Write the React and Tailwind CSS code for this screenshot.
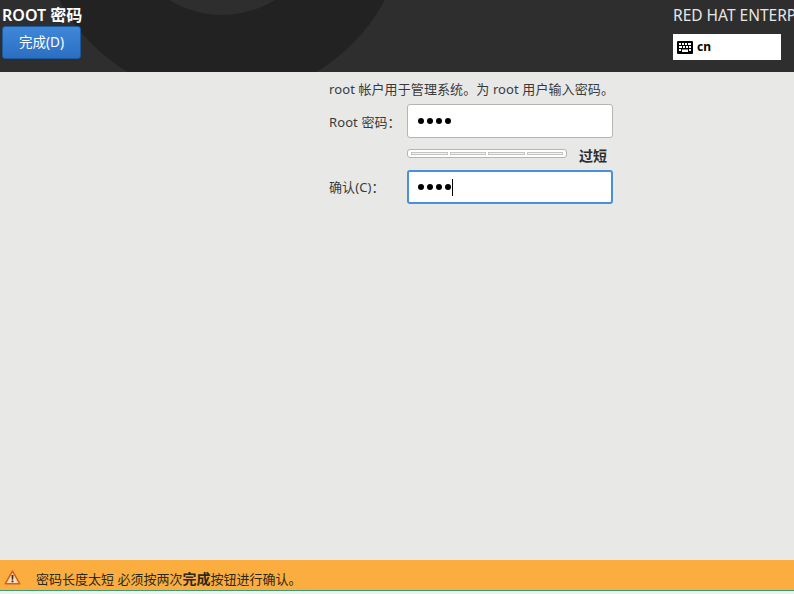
const cjk = "font-['Noto_Sans','Noto_Sans_CJK_SC',sans-serif]";

function KeyboardIcon() {
  return (
    <svg width="16" height="13" viewBox="0 0 16 13" className="shrink-0">
      <rect x="0" y="0" width="16" height="13" rx="1" fill="#000" />
      <path d="M2 2h2v2H2zM5 2h2v2H5zM8 2h2v2H8zM11 2h3v2h-3zM2 5h3v2H2zM6 5h2v2H6zM9 5h2v2H9zM12 5h2v2h-2zM2 8h2v2H2zM12 8h2v2h-2zM5 8.5h6V11H5z" fill="#fff" />
    </svg>
  );
}

function WarningIcon() {
  return (
    <svg width="17" height="15" viewBox="0 0 17 15" className="shrink-0 -mt-[4px]">
      <path d="M8.5 1.2 L15.8 13.8 H1.2 Z" fill="#f6dfb8" stroke="#d9601a" strokeWidth="1.6" strokeLinejoin="round" />
      <path d="M7.5 5h2l-.3 4.8H7.8z" fill="#3a2a1a" />
      <rect x="7.6" y="10.5" width="1.8" height="1.8" fill="#3a2a1a" />
    </svg>
  );
}

function Dots() {
  return (
    <span className="flex gap-[3px]">
      {[0, 1, 2, 3].map((i) => (
        <span key={i} className="w-[6px] h-[6px] rounded-full bg-black" />
      ))}
    </span>
  );
}

export default function App() {
  return (
    <div className={`w-[794px] h-[594px] flex flex-col overflow-hidden bg-[#e8e8e7] ${cjk}`}>
      <header className="relative h-[72px] shrink-0 bg-[#2e2e2e] overflow-hidden flex justify-between">
        <svg className="absolute left-0 top-0" width="794" height="72" viewBox="0 0 794 72">
          <circle cx="222" cy="-86" r="184" fill="#222222" />
          <circle cx="222" cy="-86" r="101" fill="#2e2e2e" />
        </svg>
        <div className="relative pl-[2px] pt-[5px]">
          <h1 className="text-[16px] leading-[21px] font-semibold text-white">ROOT 密码</h1>
          <button className="w-[79px] h-[33px] rounded-[3px] border border-[#1c5a9e] bg-gradient-to-b from-[#3f87d9] to-[#2b6fc2] text-[13.5px] text-white">
            完成(D)
          </button>
        </div>
        <div className="relative w-[121px] pt-[5px]">
          <div className="text-[15.5px] leading-[20px] text-[#e6e6e6] whitespace-nowrap">RED HAT ENTERPRISE LINUX</div>
          <div className="mt-[9px] w-[108px] h-[26px] bg-white flex items-center gap-[4px] pl-[4px]">
            <KeyboardIcon />
            <span className="text-[12px] font-bold text-black">cn</span>
          </div>
        </div>
      </header>

      <main className="flex-1 pl-[329px] pt-[8px] text-[13px] tracking-[0.1px] text-[#3a3a3a]">
        <p className="leading-[18px] whitespace-nowrap">root 帐户用于管理系统。为 root 用户输入密码。</p>
        <div className="mt-[6px] flex items-center">
          <label className="w-[78px] whitespace-nowrap pt-[3px]">Root 密码：</label>
          <div className="w-[206px] h-[34px] bg-white border border-[#b5b5b3] rounded-[3px] flex items-center pl-[10px] pb-[1px]">
            <Dots />
          </div>
        </div>
        <div className="mt-[5px] flex items-start h-[26px]">
          <div className="ml-[78px] mt-[6px] w-[160px] h-[9px] rounded-[3px] border border-[#b5b5b3] bg-white flex items-center gap-[2px] px-[3px]">
            {[0, 1, 2, 3].map((i) => (
              <span key={i} className="flex-1 h-[3px] border border-[#c4c4c2] bg-[#f2f2f2]" />
            ))}
          </div>
          <span className="ml-[12px] text-[14px] leading-[26px] font-bold text-[#2e2e2e]">过短</span>
        </div>
        <div className="mt-[1px] flex items-center">
          <label className="w-[78px] whitespace-nowrap pt-[2px]">确认(C)：</label>
          <div className="w-[206px] h-[34px] bg-white border-2 border-[#4a90d9] rounded-[3px] flex items-center pl-[9px]">
            <Dots />
            <span className="ml-[1px] w-[1px] h-[17px] bg-black" />
          </div>
        </div>
      </main>

      <footer className="h-[30px] shrink-0 bg-[#fbad3f] flex items-center pl-[4px] pt-[8px] text-[13px] text-[#2a2a1a]">
        <WarningIcon />
        <span className="ml-[15px]">
          密码长度太短 必须按两次<b className="text-[14px]">完成</b>按钮进行确认。
        </span>
      </footer>
      <div className="h-[1px] shrink-0 bg-[#3f9a7a]" />
      <div className="h-[3px] shrink-0 bg-[#eef2ee]" />
    </div>
  );
}
